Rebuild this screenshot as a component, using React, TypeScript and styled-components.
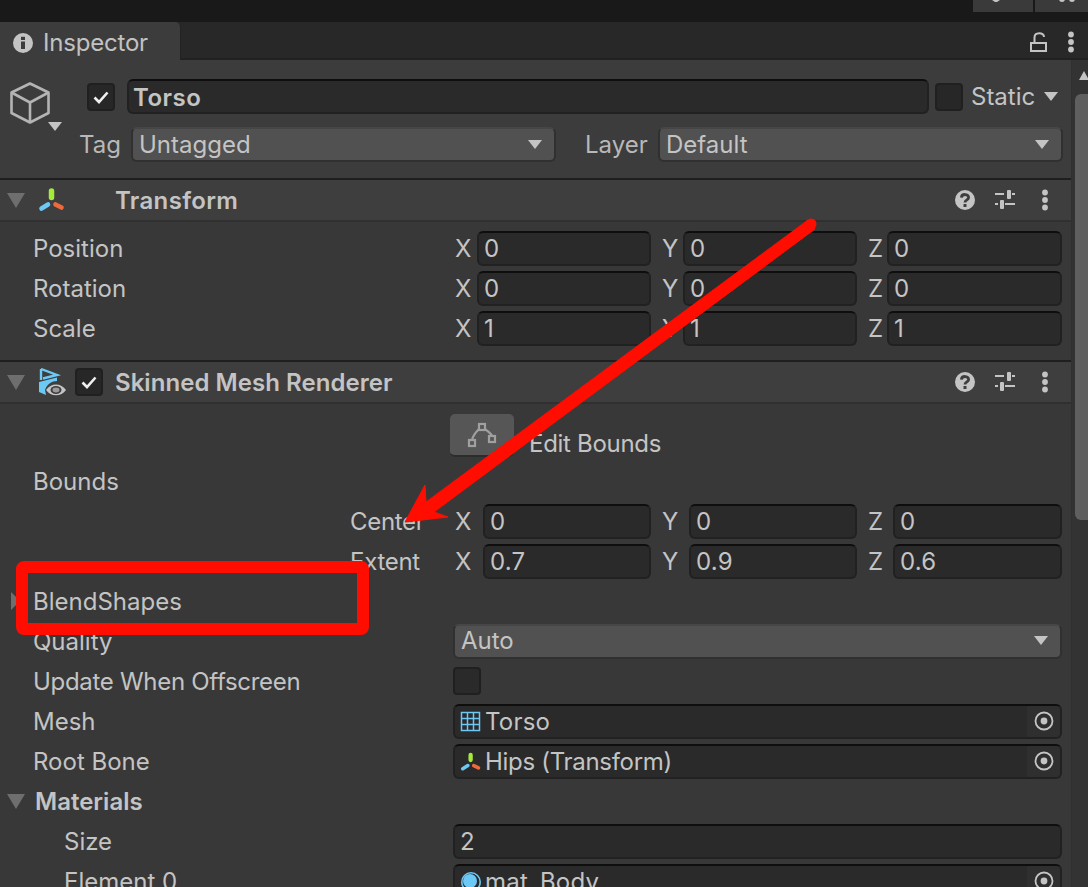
import React from "react";
import styled, { createGlobalStyle } from "styled-components";

const Global = createGlobalStyle`
  html, body { margin: 0; padding: 0; background: #383838; overflow: hidden; }
  * { box-sizing: border-box; }
  svg { display: block; }
`;

const Screen = styled.div`
  position: relative;
  width: 1088px;
  height: 887px;
  overflow: hidden;
  background: #383838;
  font-family: Inter, "Liberation Sans", sans-serif;
  font-size: 24px;
  color: #c4c4c4;
  display: flex;
  flex-direction: column;
`;
const TopBar = styled.div`
  height: 22px;
  flex: none;
  background: #191919;
  display: flex;
  justify-content: flex-end;
  gap: 2px;
`;
const TopTab = styled.div<{ $w: number }>`
  width: ${(p) => p.$w}px;
  height: 12px;
  background: #3a3a3a;
`;
const TabStrip = styled.div`
  height: 38px;
  flex: none;
  background: #282828;
  border-bottom: 2px solid #212121;
  display: flex;
  align-items: flex-start;
  padding-right: 12px;
`;
const Tab = styled.div`
  width: 181px;
  height: 38px;
  background: #3c3c3c;
  border-top-right-radius: 5px;
  border-right: 1px solid #222;
  display: flex;
  align-items: center;
  gap: 10px;
  padding: 3px 0 0 13px;
  color: #c2c2c2;
  letter-spacing: -0.2px;
`;
const TabActions = styled.div`
  margin-left: auto;
  height: 36px;
  padding-top: 4px;
  display: flex;
  align-items: center;
  gap: 19px;
`;
const Body = styled.div`
  flex: 1;
  display: flex;
  min-height: 0;
`;
const Main = styled.div`
  width: 1071px;
  flex: none;
`;
const Scrollbar = styled.div`
  flex: 1;
  background: #333333;
  border-left: 1px solid #303030;
  padding-left: 3px;
  padding-top: 11px;
  display: flex;
  flex-direction: column;
`;
const ScrollArrow = styled.div`
  width: 0;
  height: 0;
  margin-left: 4px;
  border-left: 5.5px solid transparent;
  border-right: 5.5px solid transparent;
  border-bottom: 9px solid #c4c4c4;
`;
const ScrollThumb = styled.div`
  margin-top: 14px;
  height: 426px;
  background: #5f5f5f;
  border-radius: 6px 0 0 6px;
`;
const ObjectHeader = styled.div`
  height: 120px;
  background: #3c3c3c;
  border-bottom: 2px solid #1f1f1f;
  display: flex;
  padding: 19px 8px 0 10px;
`;
const CubeWrap = styled.div`
  position: relative;
  width: 53px;
  height: 60px;
  flex: none;
  padding-top: 3px;
`;
const CubeCaret = styled.div`
  position: absolute;
  left: 38px;
  top: 43px;
  width: 0;
  height: 0;
  border-left: 7px solid transparent;
  border-right: 7px solid transparent;
  border-top: 9px solid #c4c4c4;
`;
const ObjectRows = styled.div`
  flex: 1;
  display: flex;
  flex-direction: column;
  gap: 13px;
`;
const NameRow = styled.div`
  display: flex;
  align-items: center;
  height: 35px;
  padding-left: 24px;
`;
const Check = styled.div`
  width: 28px;
  height: 28px;
  flex: none;
  background: #272727;
  border: 2px solid #202020;
  border-radius: 4px;
  display: flex;
  align-items: center;
  justify-content: center;
`;
const NameField = styled.div`
  width: 802px;
  height: 35px;
  margin: 0 6px 0 12px;
  background: #2a2a2a;
  border: 2px solid #212121;
  border-top-color: #0e0e0e;
  border-radius: 6px;
  padding-left: 4px;
  font-weight: 600;
  line-height: 34px;
  letter-spacing: 0.5px;
`;
const StaticLabel = styled.span`
  margin-left: 8px;
`;
const Caret = styled.div`
  width: 0;
  height: 0;
  flex: none;
  border-left: 7.5px solid transparent;
  border-right: 7.5px solid transparent;
  border-top: 9px solid #c4c4c4;
`;
const StaticCaret = styled(Caret)`
  margin-left: 9px;
`;
const TagRow = styled.div`
  display: flex;
  align-items: center;
  height: 35px;
  padding-left: 16px;
`;
const Popup = styled.div<{ $w?: number }>`
  width: ${(p) => (p.$w ? `${p.$w}px` : "auto")};
  flex: ${(p) => (p.$w ? "none" : 1)};
  height: 35px;
  background: #515151;
  border: 2px solid #303030;
  border-top-color: #464646;
  border-radius: 6px;
  padding: 0 12px 1px 6px;
  display: flex;
  align-items: center;
  justify-content: space-between;
`;
const TagLabel = styled.span`
  width: 52px;
  flex: none;
  color: #b8b8b8;
`;
const LayerLabel = styled.span`
  margin-left: 29px;
  width: 73px;
  flex: none;
  color: #b8b8b8;
`;
const CompHeader = styled.div`
  height: 42px;
  background: #3e3e3e;
  border-bottom: 2px solid #303030;
  display: flex;
  align-items: center;
  padding: 0 15px 0 7px;
  font-weight: 600;
`;
const Fold = styled.div`
  width: 0;
  height: 0;
  flex: none;
  border-left: 9px solid transparent;
  border-right: 9px solid transparent;
  border-top: 15px solid #6e6e6e;
`;
const HeaderIcon = styled.div`
  width: 28px;
  height: 28px;
  flex: none;
  margin-left: 13px;
`;
const HeaderCheck = styled(Check)`
  margin: 0 12px 0 9px;
`;
const HeaderActions = styled.div`
  margin-left: auto;
  display: flex;
  align-items: center;
  gap: 18px;
`;
const ActionSlot = styled.div`
  width: 22px;
  height: 22px;
  display: flex;
  align-items: center;
  justify-content: center;
`;
const HeaderTitle = styled.span<{ $indent?: number; $ls: number }>`
  margin-left: ${(p) => p.$indent ?? 0}px;
  letter-spacing: ${(p) => p.$ls}px;
`;
const Section = styled.div<{ $pt: number; $pb: number; $line?: boolean }>`
  padding: ${(p) => p.$pt}px 9px ${(p) => p.$pb}px 0;
  border-bottom: ${(p) => (p.$line ? "2px solid #1f1f1f" : "none")};
`;
const Row = styled.div`
  height: 40px;
  display: flex;
  align-items: center;
`;
const Label = styled.div<{ $indent?: number; $bold?: boolean; $ls?: number }>`
  width: 453px;
  flex: none;
  padding-left: ${(p) => p.$indent ?? 33}px;
  font-weight: ${(p) => (p.$bold ? 600 : 400)};
  letter-spacing: ${(p) => p.$ls ?? 0}px;
  white-space: nowrap;
  position: relative;
`;
const SubLabel = styled(Label)`
  padding-left: 350px;
  letter-spacing: -0.3px;
`;
const Cells = styled.div`
  flex: 1;
  margin-left: 2px;
  display: grid;
  grid-template-columns: 196px 195px 194px;
  gap: 11px;
`;
const Cell = styled.div<{ $axis: number }>`
  display: grid;
  grid-template-columns: ${(p) => p.$axis}px 1fr;
  align-items: center;
`;
const Field = styled.div<{ $ls?: number }>`
  flex: 1;
  height: 35px;
  background: #2a2a2a;
  border: 2px solid #212121;
  border-top-color: #0e0e0e;
  border-radius: 6px;
  padding: 1px 0 0 5px;
  line-height: 32px;
  letter-spacing: ${(p) => p.$ls ?? 0.2}px;
  display: flex;
  align-items: center;
  position: relative;
`;
const FieldIcon = styled.div`
  width: 22px;
  height: 22px;
  flex: none;
  margin-right: 3px;
`;
const Picker = styled.div`
  position: absolute;
  right: 0;
  top: 0;
  bottom: 0;
  width: 33px;
  background: #2f2f2f;
  border-radius: 0 4px 4px 0;
  display: flex;
  align-items: center;
  justify-content: center;
`;
const PopupWide = styled(Popup)`
  flex: 1;
`;
const EditRow = styled.div`
  height: 47px;
  padding-left: 450px;
  display: flex;
  align-items: flex-start;
`;
const EditButton = styled.div`
  width: 64px;
  height: 43px;
  background: #565656;
  border-bottom: 2px solid #2c2c2c;
  border-radius: 5px;
  display: flex;
  align-items: center;
  justify-content: center;
  flex: none;
`;
const EditText = styled.span`
  margin: 15px 0 0 15px;
  letter-spacing: -0.3px;
`;
const FoldSmall = styled.div`
  position: absolute;
  left: 11px;
  top: 5px;
  width: 0;
  height: 0;
  border-top: 9px solid transparent;
  border-bottom: 9px solid transparent;
  border-left: 9px solid #6e6e6e;
`;
const MaterialsFold = styled(Fold)`
  position: absolute;
  left: 7px;
  top: 7px;
`;
const EmptyCheck = styled(Check)`
  background: #2a2a2a;
`;
const Annotation = styled.svg`
  position: absolute;
  left: 0;
  top: 0;
  pointer-events: none;
`;

const CheckMark = () => (
  <svg width="20" height="20" viewBox="0 0 20 20">
    <path d="M3.5 10.5 L8 15 L16.5 5.5" fill="none" stroke="#f0f0f0" strokeWidth="2.6" />
  </svg>
);

const TransformIcon = ({ size }: { size: number }) => (
  <svg width={size} height={size} viewBox="0 0 28 28" fill="none" strokeLinecap="round">
    <path d="M13.5 5 V11.5" stroke="#a6e83c" strokeWidth="5.5" />
    <path d="M10 18.5 L3.5 22.5" stroke="#6cc8f5" strokeWidth="4.6" />
    <path d="M17.5 18.5 L23.5 21.5" stroke="#ee6a3a" strokeWidth="4.6" />
  </svg>
);

const Dots = () => (
  <svg width="10" height="22" viewBox="0 0 10 22" fill="#c4c4c4">
    <circle cx="5" cy="3.5" r="2.9" />
    <circle cx="5" cy="11" r="2.9" />
    <circle cx="5" cy="18.5" r="2.9" />
  </svg>
);

const Help = () => (
  <svg width="22" height="22" viewBox="0 0 22 22">
    <circle cx="11" cy="11" r="10" fill="#c4c4c4" />
    <path d="M7.4 8.6 C7.6 4.4 14.8 4.6 14.6 8.6 C14.5 11 11 10.8 11 13.6" fill="none" stroke="#3e3e3e" strokeWidth="2.8" />
    <rect x="9.5" y="15" width="3" height="3" fill="#3e3e3e" />
  </svg>
);

const Sliders = () => (
  <svg width="22" height="22" viewBox="0 0 22 22" fill="#c4c4c4">
    <rect x="1" y="4" width="9" height="2" />
    <rect x="18" y="4" width="3" height="2" />
    <rect x="13" y="1" width="4" height="9" rx="1" />
    <rect x="1" y="14" width="3" height="2" />
    <rect x="11" y="14" width="10" height="2" />
    <rect x="6" y="11" width="4" height="9" rx="1" />
  </svg>
);

const Actions = () => (
  <HeaderActions>
    <ActionSlot>
      <Help />
    </ActionSlot>
    <ActionSlot>
      <Sliders />
    </ActionSlot>
    <ActionSlot>
      <Dots />
    </ActionSlot>
  </HeaderActions>
);

const Target = () => (
  <svg width="20" height="20" viewBox="0 0 20 20">
    <circle cx="10" cy="10" r="8.5" fill="none" stroke="#c4c4c4" strokeWidth="1.8" />
    <circle cx="10" cy="10" r="3.4" fill="#c4c4c4" />
  </svg>
);

const AXIS_TRIM = [0, 1, 3];

const Vector = ({ axis, values }: { axis: number; values: string[] }) => (
  <Cells>
    {["X", "Y", "Z"].map((a, i) => (
      <Cell key={a} $axis={axis - AXIS_TRIM[i]}>
        <span>{a}</span>
        <Field>{values[i]}</Field>
      </Cell>
    ))}
  </Cells>
);

export default function App() {
  return (
    <Screen>
      <Global />
      <TopBar>
        <TopTab $w={60}>
          <svg width="60" height="3" viewBox="0 0 60 3">
            <path d="M17 0 H27 L24 2 H22 L19 0 Z" fill="#c4c4c4" />
          </svg>
        </TopTab>
        <TopTab $w={53}>
          <svg width="53" height="3" viewBox="0 0 53 3" fill="#c4c4c4">
            <circle cx="27" cy="-1" r="3" />
            <circle cx="37" cy="-1" r="3" />
          </svg>
        </TopTab>
      </TopBar>
      <TabStrip>
        <Tab>
          <svg width="20" height="20" viewBox="0 0 20 20">
            <circle cx="10" cy="10" r="10" fill="#c4c4c4" />
            <rect x="8" y="8.5" width="4" height="7.5" fill="#3c3c3c" />
            <rect x="8" y="3.8" width="4" height="3.2" fill="#3c3c3c" />
          </svg>
          Inspector
        </Tab>
        <TabActions>
          <svg width="17" height="20" viewBox="0 0 17 20" fill="none" stroke="#c4c4c4" strokeWidth="2">
            <rect x="1" y="11" width="15" height="8" />
            <path d="M4.5 11 V5.5 C4.5 0 14 0 14 5" />
          </svg>
          <Dots />
        </TabActions>
      </TabStrip>
      <Body>
        <Main>
          <ObjectHeader>
            <CubeWrap>
              <svg width="40" height="42" viewBox="0 0 40 42" fill="none" stroke="#b4b4b4" strokeWidth="2.6" strokeLinejoin="round">
                <path d="M20 1.5 L38.5 10.5 V31 L20 40.5 L1.5 31 V10.5 Z" />
                <path d="M1.5 10.5 L20 20.5 L38.5 10.5 M20 20.5 V40.5" />
              </svg>
              <CubeCaret />
            </CubeWrap>
            <ObjectRows>
              <NameRow>
                <Check>
                  <CheckMark />
                </Check>
                <NameField>Torso</NameField>
                <Check />
                <StaticLabel>Static</StaticLabel>
                <StaticCaret />
              </NameRow>
              <TagRow>
                <TagLabel>Tag</TagLabel>
                <Popup $w={425}>
                  Untagged
                  <Caret />
                </Popup>
                <LayerLabel>Layer</LayerLabel>
                <Popup>
                  Default
                  <Caret />
                </Popup>
              </TagRow>
            </ObjectRows>
          </ObjectHeader>
          <CompHeader>
            <Fold />
            <HeaderIcon>
              <TransformIcon size={28} />
            </HeaderIcon>
            <HeaderTitle $indent={49} $ls={0.35}>
              Transform
            </HeaderTitle>
            <Actions />
          </CompHeader>
          <Section $pt={6} $pb={12} $line>
            <Row>
              <Label>Position</Label>
              <Vector axis={22} values={["0", "0", "0"]} />
            </Row>
            <Row>
              <Label>Rotation</Label>
              <Vector axis={22} values={["0", "0", "0"]} />
            </Row>
            <Row>
              <Label>Scale</Label>
              <Vector axis={22} values={["1", "1", "1"]} />
            </Row>
          </Section>
          <CompHeader>
            <Fold />
            <HeaderIcon>
              <svg width="28" height="28" viewBox="0 0 28 28">
                <path d="M3 1 L19 7 L5 10.5" fill="none" stroke="#6cc8f5" strokeWidth="2.4" />
                <path d="M3 1 V12" stroke="#6cc8f5" strokeWidth="2.4" />
                <path d="M1 14 L19 9.5 V13 C14 13 9 16 7 22 L8 27 L1 24 Z" fill="#6cc8f5" />
                <path d="M8 22 C12.5 14.5 23.5 14.5 28 22 C23.5 29 12.5 29 8 22 Z" fill="#c4c4c4" />
                <ellipse cx="18" cy="22" rx="5.5" ry="4" fill="#3e3e3e" />
                <ellipse cx="18" cy="22" rx="3.5" ry="2.4" fill="#9a9a9a" />
              </svg>
            </HeaderIcon>
            <HeaderCheck>
              <CheckMark />
            </HeaderCheck>
            <HeaderTitle $ls={0.05}>Skinned Mesh Renderer</HeaderTitle>
            <Actions />
          </CompHeader>
          <Section $pt={10} $pb={0}>
            <EditRow>
              <EditButton>
                <svg width="34" height="28" viewBox="0 0 34 28" fill="none" stroke="#a0a0a0" strokeWidth="2.2">
                  <rect x="14" y="3" width="6" height="6" />
                  <rect x="4" y="19" width="6" height="6" />
                  <rect x="24" y="15" width="6" height="6" />
                  <path d="M7 19 C8 14 11 11 14 8 M20 8 C22 10 26 12 27 15" />
                </svg>
              </EditButton>
              <EditText>Edit Bounds</EditText>
            </EditRow>
            <Row>
              <Label>Bounds</Label>
            </Row>
            <Row>
              <SubLabel>Center</SubLabel>
              <Vector axis={28} values={["0", "0", "0"]} />
            </Row>
            <Row>
              <SubLabel>Extent</SubLabel>
              <Vector axis={28} values={["0.7", "0.9", "0.6"]} />
            </Row>
            <Row>
              <Label>
                <FoldSmall />
                BlendShapes
              </Label>
            </Row>
            <Row>
              <Label>Quality</Label>
              <PopupWide>
                Auto
                <Caret />
              </PopupWide>
            </Row>
            <Row>
              <Label $ls={-0.3}>Update When Offscreen</Label>
              <EmptyCheck />
            </Row>
            <Row>
              <Label>Mesh</Label>
              <Field>
                <FieldIcon>
                  <svg width="22" height="22" viewBox="0 0 22 22" fill="none" stroke="#6cc8f5" strokeWidth="1.5">
                    <rect x="1.5" y="1.5" width="18" height="18" />
                    <path d="M7.5 1.5 V19.5 M13.5 1.5 V19.5 M1.5 7.5 H19.5 M1.5 13.5 H19.5" />
                  </svg>
                </FieldIcon>
                Torso
                <Picker>
                  <Target />
                </Picker>
              </Field>
            </Row>
            <Row>
              <Label>Root Bone</Label>
              <Field $ls={-0.3}>
                <FieldIcon>
                  <TransformIcon size={22} />
                </FieldIcon>
                Hips (Transform)
                <Picker>
                  <Target />
                </Picker>
              </Field>
            </Row>
            <Row>
              <Label $indent={35} $bold>
                <MaterialsFold />
                Materials
              </Label>
            </Row>
            <Row>
              <Label $indent={64}>Size</Label>
              <Field>2</Field>
            </Row>
            <Row>
              <Label $indent={64}>Element 0</Label>
              <Field>
                <FieldIcon>
                  <svg width="22" height="22" viewBox="0 0 22 22">
                    <circle cx="11" cy="11" r="9.2" fill="none" stroke="#6cc8f5" strokeWidth="1.6" />
                    <circle cx="10" cy="10" r="7" fill="#6cc8f5" />
                  </svg>
                </FieldIcon>
                mat_Body
                <Picker>
                  <Target />
                </Picker>
              </Field>
            </Row>
          </Section>
        </Main>
        <Scrollbar>
          <ScrollArrow />
          <ScrollThumb />
        </Scrollbar>
      </Body>
      <Annotation width="1088" height="887" viewBox="0 0 1088 887">
        <rect x="22" y="567" width="341" height="62" rx="2" fill="none" stroke="#ff0d00" strokeWidth="12" strokeLinejoin="round" />
        <path d="M808 220 L426 502 L425 485 L405 522 L448 517 L434 512 L815 229 Z" fill="#ff0d00" stroke="#ff0d00" strokeWidth="1" />
        <circle cx="811" cy="224" r="5.5" fill="#ff0d00" />
      </Annotation>
    </Screen>
  );
}
